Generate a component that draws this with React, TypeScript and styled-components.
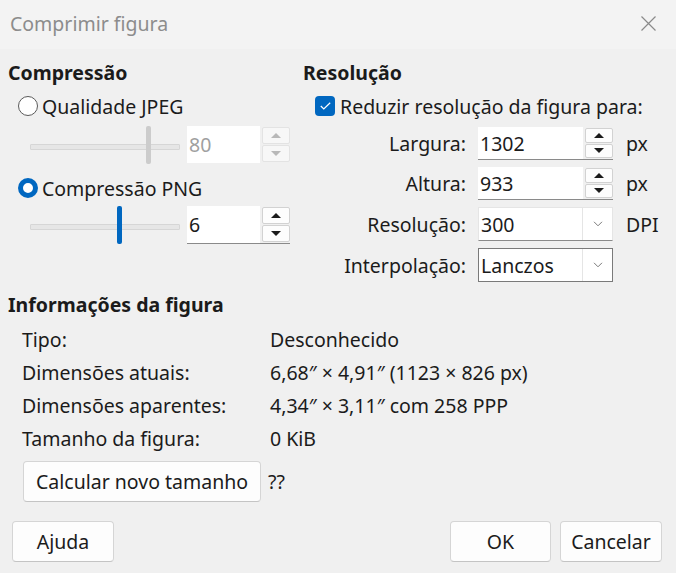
import styled, { createGlobalStyle } from 'styled-components'

const GlobalStyle = createGlobalStyle`
  html, body {
    margin: 0;
    padding: 0;
    background: #f0f0f0;
  }
  body {
    font-family: 'Noto Sans', 'Open Sans', sans-serif;
    font-size: 19.5px;
    color: #1b1b1b;
  }
  * {
    box-sizing: border-box;
  }
`

const Dialog = styled.div`
  width: 676px;
  height: 573px;
  display: flex;
  flex-direction: column;
  background: #f0f0f0;
  overflow: hidden;
`

const TitleBar = styled.div`
  height: 49px;
  flex: none;
  display: flex;
  align-items: center;
  justify-content: space-between;
  padding: 0 20px 2px 10px;
  background: #f3f3f3;
  color: #8c8c8c;
  font-size: 19.5px;
`

const CloseIcon = styled.svg`
  width: 15px;
  height: 15px;
  stroke: #8a8a8a;
  stroke-width: 1.2;
`

const Body = styled.div`
  flex: 1;
  display: flex;
  flex-direction: column;
  padding: 12px 14px 11px 8px;
`

const Columns = styled.div`
  display: grid;
  grid-template-columns: 295px 1fr;
`

const Column = styled.div`
  display: flex;
  flex-direction: column;
`

const Heading = styled.div`
  height: 24px;
  line-height: 24px;
  font-weight: 700;
`

const OptionRow = styled.div<{ $indent: number; $top?: number }>`
  height: 22px;
  margin-top: ${(p) => p.$top ?? 10}px;
  padding-left: ${(p) => p.$indent}px;
  display: flex;
  align-items: center;
  gap: 4px;
  white-space: nowrap;
`

const Radio = styled.span<{ $checked?: boolean }>`
  width: 20px;
  height: 20px;
  flex: none;
  border-radius: 50%;
  border: ${(p) => (p.$checked ? '5px solid #0067c0' : '1px solid #5a5a5a')};
  background: #fff;
`

const Checkbox = styled.span`
  width: 20px;
  height: 20px;
  flex: none;
  border-radius: 4px;
  background: #0067c0;
  display: grid;
  place-items: center;
  margin-right: 1px;
`

const SliderRow = styled.div<{ $top: number }>`
  height: 38px;
  margin-top: ${(p) => p.$top}px;
  padding-left: 22px;
  display: flex;
  align-items: center;
  gap: 7px;
`

const Slider = styled.div`
  position: relative;
  width: 150px;
  height: 38px;
  flex: none;

  &::before {
    content: '';
    position: absolute;
    left: 0;
    right: 0;
    top: 18px;
    height: 4px;
    border: 1px solid #d6d6d6;
    background: #e6e6e6;
    border-radius: 1px;
  }
`

const Thumb = styled.span<{ $active?: boolean }>`
  position: absolute;
  top: 0;
  width: 5px;
  height: 38px;
  border-radius: 2px;
  background: ${(p) => (p.$active ? '#0067c0' : '#cccccc')};
`

const Spin = styled.div<{ $width: number; $disabled?: boolean }>`
  display: flex;
  width: ${(p) => p.$width}px;
  height: 100%;
  gap: 2px;
  flex: none;
  border-bottom: 1px solid ${(p) => (p.$disabled ? 'transparent' : '#8a8a8a')};
`

const Field = styled.div<{ $disabled?: boolean }>`
  flex: 1;
  min-width: 0;
  background: #fff;
  display: flex;
  align-items: center;
  padding-left: 2px;
  color: ${(p) => (p.$disabled ? '#a0a0a0' : '#1b1b1b')};
`

const SpinButtons = styled.div`
  width: 28px;
  flex: none;
  display: flex;
  flex-direction: column;
  gap: 1px;
  padding: 1px 0;
`

const SpinButton = styled.div<{ $disabled?: boolean }>`
  flex: 1;
  display: grid;
  place-items: center;
  background: ${(p) => (p.$disabled ? '#f7f7f7' : '#fdfdfd')};
  border: 1px solid ${(p) => (p.$disabled ? '#e3e3e3' : '#d2d2d2')};
  border-radius: 2px;
`

const Arrow = styled.span<{ $down?: boolean; $disabled?: boolean }>`
  width: 0;
  height: 0;
  border-left: 5px solid transparent;
  border-right: 5px solid transparent;
  ${(p) => (p.$down ? 'border-top' : 'border-bottom')}: 5px solid ${(p) =>
    p.$disabled ? '#b8b8b8' : '#1b1b1b'};
`

const FormGrid = styled.div`
  margin-top: 10px;
  display: grid;
  grid-template-columns: 163px 135px auto;
  grid-template-rows: 33px 33px 34px 34px;
  column-gap: 12px;
  row-gap: 7px;
  align-items: center;
`

const FieldLabel = styled.div`
  text-align: right;
  white-space: nowrap;
`

const Unit = styled.div`
  padding-left: 1px;
`

const Combo = styled.div<{ $focused?: boolean }>`
  display: flex;
  height: 100%;
  background: #fff;
  border: 1px solid ${(p) => (p.$focused ? '#7a7a7a' : '#e5e5e5')};
  border-bottom-color: ${(p) => (p.$focused ? '#7a7a7a' : '#8a8a8a')};
`

const ComboText = styled.div`
  flex: 1;
  display: flex;
  align-items: center;
  padding-left: 2px;
`

const ComboButton = styled.div`
  width: 30px;
  flex: none;
  display: grid;
  place-items: center;
  border-left: 1px solid #e5e5e5;
`

const Chevron = () => (
  <svg width="10" height="6" viewBox="0 0 10 6" fill="none" stroke="#7a7a7a" strokeWidth="1">
    <path d="M1 0.8 L5 4.8 L9 0.8" />
  </svg>
)

const InfoHeading = styled(Heading)`
  margin-top: 11px;
`

const InfoGrid = styled.div`
  margin-top: 6px;
  padding-left: 14px;
  display: grid;
  grid-template-columns: 248px 1fr;
  grid-auto-rows: 33px;
  align-items: center;
  white-space: nowrap;
`

const CalcRow = styled.div`
  margin-top: 6px;
  padding-left: 15px;
  display: flex;
  align-items: center;
  gap: 7px;
`

const Button = styled.button<{ $width?: number }>`
  height: 41px;
  ${(p) => (p.$width ? `width: ${p.$width}px;` : 'padding: 0 12px;')}
  font: inherit;
  color: #1b1b1b;
  background: #fdfdfd;
  border: 1px solid #d5d5d5;
  border-bottom-color: #c4c4c4;
  border-radius: 4px;
  white-space: nowrap;
`

const Footer = styled.div`
  margin-top: auto;
  padding-left: 4px;
  display: flex;
  align-items: center;
  gap: 9px;
`

const Spacer = styled.div`
  flex: 1;
`

type SpinBoxProps = { value: string; width: number; disabled?: boolean }

const SpinBox = ({ value, width, disabled }: SpinBoxProps) => (
  <Spin $width={width} $disabled={disabled}>
    <Field $disabled={disabled}>{value}</Field>
    <SpinButtons>
      <SpinButton $disabled={disabled}>
        <Arrow $disabled={disabled} />
      </SpinButton>
      <SpinButton $disabled={disabled}>
        <Arrow $down $disabled={disabled} />
      </SpinButton>
    </SpinButtons>
  </Spin>
)

const thumbLeft = (fraction: number) => `${fraction * 145}px`

export default function App() {
  return (
    <>
      <GlobalStyle />
      <Dialog>
        <TitleBar>
          <span>Comprimir figura</span>
          <CloseIcon viewBox="0 0 15 15">
            <path d="M0.5 0.5 L14.5 14.5 M14.5 0.5 L0.5 14.5" />
          </CloseIcon>
        </TitleBar>
        <Body>
          <Columns>
            <Column>
              <Heading>Compressão</Heading>
              <OptionRow $indent={10}>
                <Radio />
                Qualidade JPEG
              </OptionRow>
              <SliderRow $top={9}>
                <Slider>
                  <Thumb style={{ left: thumbLeft(0.8) }} />
                </Slider>
                <SpinBox value="80" width={103} disabled />
              </SliderRow>
              <OptionRow $indent={10} $top={13}>
                <Radio $checked />
                Compressão PNG
              </OptionRow>
              <SliderRow $top={7}>
                <Slider>
                  <Thumb $active style={{ left: thumbLeft(0.6) }} />
                </Slider>
                <SpinBox value="6" width={103} />
              </SliderRow>
            </Column>
            <Column>
              <Heading>Resolução</Heading>
              <OptionRow $indent={12}>
                <Checkbox>
                  <svg width="11" height="8" viewBox="0 0 11 8" fill="none" stroke="#fff" strokeWidth="1.2">
                    <path d="M0.8 4 L3.8 7 L10.2 0.8" />
                  </svg>
                </Checkbox>
                Reduzir resolução da figura para:
              </OptionRow>
              <FormGrid>
                <FieldLabel>Largura:</FieldLabel>
                <SpinBox value="1302" width={135} />
                <Unit>px</Unit>
                <FieldLabel>Altura:</FieldLabel>
                <SpinBox value="933" width={135} />
                <Unit>px</Unit>
                <FieldLabel>Resolução:</FieldLabel>
                <Combo>
                  <ComboText>300</ComboText>
                  <ComboButton>
                    <Chevron />
                  </ComboButton>
                </Combo>
                <Unit>DPI</Unit>
                <FieldLabel>Interpolação:</FieldLabel>
                <Combo $focused>
                  <ComboText>Lanczos</ComboText>
                  <ComboButton>
                    <Chevron />
                  </ComboButton>
                </Combo>
                <span />
              </FormGrid>
            </Column>
          </Columns>

          <InfoHeading>Informações da figura</InfoHeading>
          <InfoGrid>
            <span>Tipo:</span>
            <span>Desconhecido</span>
            <span>Dimensões atuais:</span>
            <span>6,68″ × 4,91″ (1123 × 826 px)</span>
            <span>Dimensões aparentes:</span>
            <span>4,34″ × 3,11″ com 258 PPP</span>
            <span>Tamanho da figura:</span>
            <span>0 KiB</span>
          </InfoGrid>
          <CalcRow>
            <Button>Calcular novo tamanho</Button>
            <span>??</span>
          </CalcRow>

          <Footer>
            <Button $width={102}>Ajuda</Button>
            <Spacer />
            <Button $width={101}>OK</Button>
            <Button $width={102}>Cancelar</Button>
          </Footer>
        </Body>
      </Dialog>
    </>
  )
}
